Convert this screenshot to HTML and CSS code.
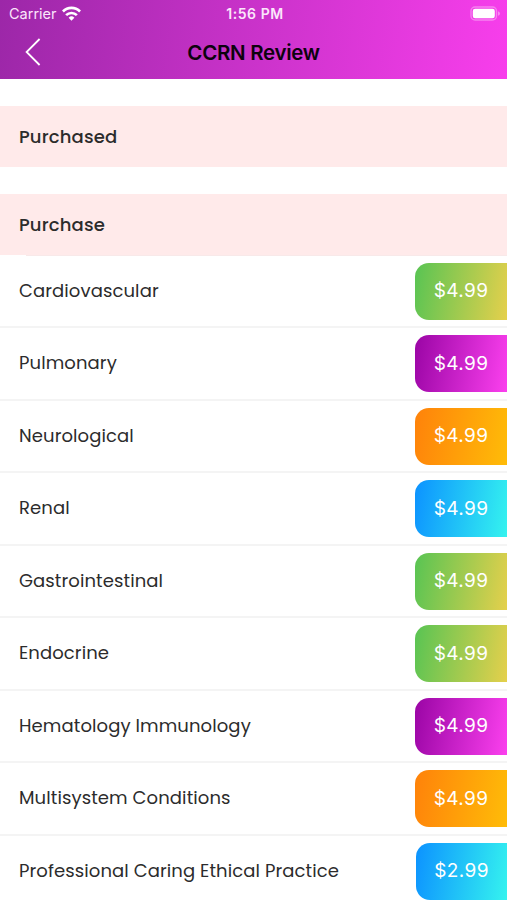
FILE: index.html
```
<!DOCTYPE html>
<html lang="en">
<head>
    <meta charset="UTF-8">
    <meta name="viewport" content="width=device-width, initial-scale=1.0">
    <title>CCRN Review</title>
    <link rel="stylesheet" href="styles.css">
</head>

<body>

    <header class="header">

        <div class="status-bar">
            <div class="carrier">
                <span>Carrier</span>
                <svg class="wifi" viewBox="0 0 18 14" fill="none" stroke="#fff" stroke-width="2.5">
                    <path d="M.9 5.1a11.4 11.4 0 0 1 16.2 0"/>
                    <path d="M3.9 8.6a7.2 7.2 0 0 1 10.2 0"/>
                    <path d="M9 13.8 6.3 11a3.9 3.9 0 0 1 5.4 0z" fill="#fff" stroke="none"/>
                </svg>
            </div>
            <span class="time">1:56 PM</span>
            <svg class="battery" viewBox="0 0 31 15">
                <rect x="1" y="1" width="25.5" height="13" rx="4" fill="none" stroke="#fff" stroke-opacity=".35" stroke-width="1.4"/>
                <rect x="2.8" y="2.8" width="22" height="9.4" rx="2.3" fill="#fff"/>
                <path d="M28 5.2v4.6q2-.7 2-2.3t-2-2.3z" fill="#fff" fill-opacity=".4"/>
            </svg>
        </div>

        <nav class="nav-bar">
            <a class="back" href="#" aria-label="Back">
                <svg viewBox="0 0 16 28" fill="none" stroke="#fff" stroke-width="1.8">
                    <path d="M14.6 1 1.6 14l13 13"/>
                </svg>
            </a>
            <h1 class="title">CCRN Review</h1>
        </nav>

    </header>

    <main>

        <h2 class="section-title">Purchased</h2>

        <h2 class="section-title">Purchase</h2>

        <ul class="list">
            <li class="item"><span class="name">Cardiovascular</span><button class="price green">$4.99</button></li>
            <li class="item"><span class="name">Pulmonary</span><button class="price purple">$4.99</button></li>
            <li class="item"><span class="name">Neurological</span><button class="price orange">$4.99</button></li>
            <li class="item"><span class="name">Renal</span><button class="price blue">$4.99</button></li>
            <li class="item"><span class="name">Gastrointestinal</span><button class="price green">$4.99</button></li>
            <li class="item"><span class="name">Endocrine</span><button class="price green">$4.99</button></li>
            <li class="item"><span class="name">Hematology Immunology</span><button class="price purple">$4.99</button></li>
            <li class="item"><span class="name">Multisystem Conditions</span><button class="price orange">$4.99</button></li>
            <li class="item"><span class="name">Professional Caring Ethical Practice</span><button class="price blue small">$2.99</button></li>
        </ul>

    </main>

</body>
</html>
```
FILE: styles.css
```
* {
    box-sizing: border-box;
}

body {
    margin: 0;
    height: 900px;
    overflow: hidden;
    background-color: #fff;
    color: #2c2c2c;
    font-family: Poppins, Inter, "Liberation Sans", sans-serif;
}

.header {
    height: 79px;
    background: linear-gradient(97deg, #9c27a8, #f83eec);
    font-family: Inter, "Liberation Sans", sans-serif;
}

.status-bar {
    display: grid;
    grid-template-columns: 1fr auto 1fr;
    align-items: center;
    height: 27px;
    padding: 0 6px 0 9px;
    color: #fbe6fb;
    font-size: 14.5px;
}

.carrier {
    display: flex;
    align-items: center;
    gap: 5px;
}

.wifi {
    width: 19px;
    height: 15px;
}

.time {
    font-size: 14px;
    font-weight: 600;
    letter-spacing: 0.55px;
}

.battery {
    justify-self: end;
    width: 31px;
    height: 15px;
}

.nav-bar {
    display: grid;
    grid-template-columns: 1fr auto 1fr;
    align-items: center;
    height: 50px;
    padding: 0 25px;
}

.back {
    display: flex;
}

.back svg {
    width: 16px;
    height: 28px;
}

.title {
    margin: 0;
    color: #0d020e;
    font-size: 20.5px;
    font-weight: 600;
    letter-spacing: -0.3px;
}

.section-title {
    display: flex;
    align-items: center;
    height: 61px;
    margin: 27px 0 0;
    padding: 0 19px;
    background-color: #ffeaea;
    font-size: 18px;
    font-weight: 500;
    letter-spacing: 0.15px;
}

.list {
    list-style-type: none;
    margin: 0;
    padding: 0;
}

.list::before {
    content: "";
    display: block;
    height: 1px;
    margin: 0 0 -0.5px 26px;
    background-color: #f8e9e9;
}

.item {
    display: flex;
    align-items: center;
    justify-content: space-between;
    height: 72.5px;
    padding-left: 19px;
    border-bottom: 2px solid #f4f4f4;
}

.name {
    padding-bottom: 1px;
    font-size: 18px;
    letter-spacing: 0.1px;
    white-space: nowrap;
}

.price {
    width: 92px;
    height: 57px;
    margin-top: 1px;
    padding: 0 0 1px;
    border: 0;
    border-radius: 14px 0 0 14px;
    color: #fff;
    font: 19px Inter, "Liberation Sans", sans-serif;
    letter-spacing: 0.4px;
}

.small {
    width: 91px;
}

.green {
    background: linear-gradient(100deg, #58c453, #e5d04c);
}

.purple {
    background: linear-gradient(100deg, #9a05a5, #fb40ee);
}

.orange {
    background: linear-gradient(100deg, #ff820a, #ffbc08);
}

.blue {
    background: linear-gradient(100deg, #0c92ff, #35f3ef);
}
```
